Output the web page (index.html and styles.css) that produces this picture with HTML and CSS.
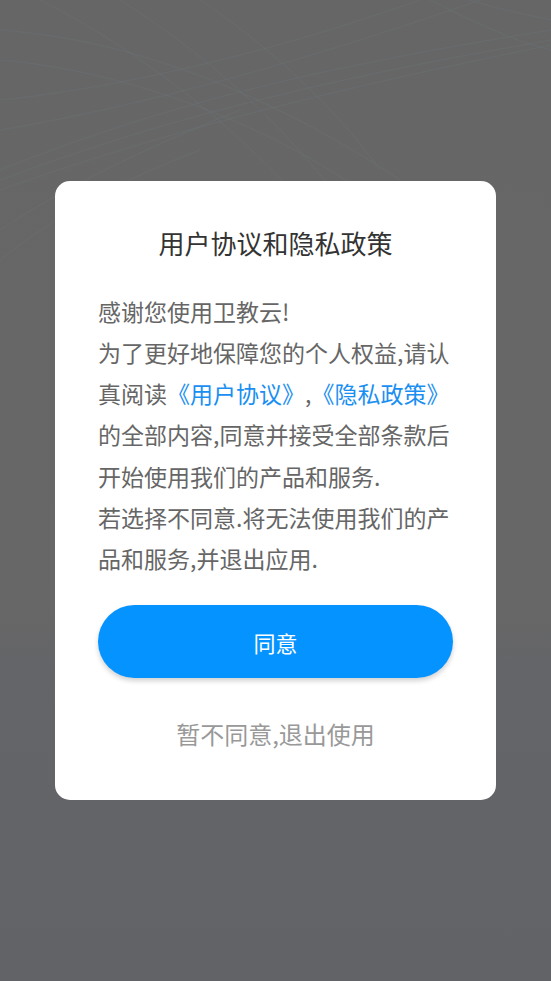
FILE: index.html
```html
<!DOCTYPE html>
<html lang="zh-CN">
<head>
<meta charset="utf-8">
<title>用户协议和隐私政策</title>
<link rel="stylesheet" href="styles.css">
</head>
<body>
<div class="screen">
  <div class="dialog">
    <h1 class="dialog-title">用户协议和隐私政策</h1>
    <p class="dialog-text">感谢您使用卫教云!<br>为了更好地保障您的个人权益,请认真阅读<a class="link" href="#">《用户协议》</a>,<a class="link" href="#">《隐私政策》</a>的全部内容,同意并接受全部条款后开始使用我们的产品和服务.<br>若选择不同意.将无法使用我们的产品和服务,并退出应用.</p>
    <button class="btn-agree" type="button">同意</button>
    <button class="btn-decline" type="button">暂不同意,退出使用</button>
  </div>
</div>
</body>
</html>
```

FILE: styles.css
```css
html, body {
  margin: 0;
  padding: 0;
}

body {
  font-family: "Noto Sans CJK SC", "Noto Sans", sans-serif;
  background: #666666;
}

.screen {
  min-height: 100vh;
  display: flex;
  align-items: center;
  justify-content: center;
  background-color: #666666;
  background-image:
    url("data:image/svg+xml;utf8,<svg xmlns='http://www.w3.org/2000/svg' width='551' height='400' viewBox='0 0 551 400'><g fill='none' stroke='%2370808c' stroke-opacity='0.35' stroke-width='0.6'><path d='M0 170 C150 110 300 70 551 30'/><path d='M0 180 C160 120 320 80 551 40'/><path d='M0 190 C170 130 330 90 551 45'/><path d='M0 60 C120 70 260 120 360 190'/><path d='M0 30 C140 40 280 100 400 180'/><path d='M40 0 C120 40 220 110 300 200'/><path d='M120 0 C200 50 280 120 340 200'/><path d='M200 0 C260 40 330 100 380 170'/><path d='M0 100 C100 90 250 60 420 0'/><path d='M0 130 C120 110 280 70 480 0'/><path d='M0 230 C60 190 140 150 240 110'/><path d='M0 260 C50 220 120 180 200 150'/><path d='M430 0 C470 20 510 40 551 50'/><path d='M470 0 C500 10 530 15 551 20'/></g></svg>"),
    linear-gradient(180deg, #666666 0%, #676767 62%, #646568 68%, #626367 100%);
  background-repeat: no-repeat;
  background-position: top left, 0 0;
  background-size: 551px 400px, 100% 100%;
}

.dialog {
  width: 441px;
  box-sizing: border-box;
  background: #ffffff;
  border-radius: 15px;
  padding: 44px 43px 49px;
  display: flex;
  flex-direction: column;
  align-items: stretch;
}

.dialog-title {
  margin: 0;
  font-size: 26px;
  line-height: 36px;
  font-weight: 400;
  color: #333333;
  text-align: center;
}

.dialog-text {
  margin: 30px 0 0;
  font-size: 23px;
  line-height: 41.2px;
  color: #666666;
}

.link {
  color: #1a8ff2;
  text-decoration: none;
}

.btn-agree {
  margin-top: 26px;
  height: 73px;
  border: none;
  border-radius: 37px;
  background: #0593ff;
  color: #ffffff;
  font-family: inherit;
  font-size: 22px;
  box-shadow: 0 3px 5px rgba(0, 0, 0, 0.18);
  padding: 0;
}

.btn-decline {
  margin-top: 39px;
  height: 34px;
  border: none;
  background: none;
  padding: 0;
  color: #999999;
  font-family: inherit;
  font-size: 24px;
  line-height: 34px;
}
```
